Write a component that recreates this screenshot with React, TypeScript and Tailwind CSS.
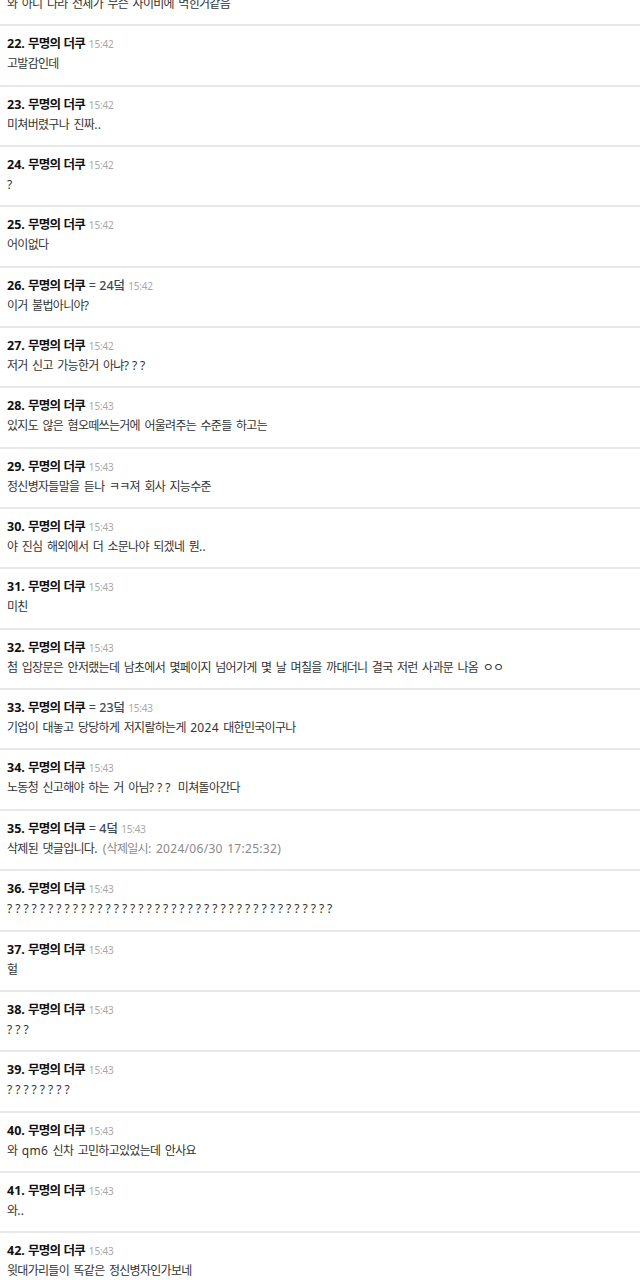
type Comment = {
  no: number;
  time: string;
  body: string;
  tag?: string;
  deleted?: string;
};

const comments: Comment[] = [
  { no: 22, time: "15:42", body: "고발감인데" },
  { no: 23, time: "15:42", body: "미쳐버렸구나 진짜.." },
  { no: 24, time: "15:42", body: "?" },
  { no: 25, time: "15:42", body: "어이없다" },
  { no: 26, time: "15:42", tag: "= 24덬", body: "이거 불법아니야?" },
  { no: 27, time: "15:42", body: "저거 신고 가능한거 아냐???" },
  { no: 28, time: "15:43", body: "있지도 않은 혐오떼쓰는거에 어울려주는 수준들 하고는" },
  { no: 29, time: "15:43", body: "정신병자들말을 듣나 ㅋㅋ져 회사 지능수준" },
  { no: 30, time: "15:43", body: "야 진심 해외에서 더 소문나야 되겠네 뭔.." },
  { no: 31, time: "15:43", body: "미친" },
  {
    no: 32,
    time: "15:43",
    body: "첨 입장문은 안저랬는데 남초에서 몇페이지 넘어가게 몇 날 며칠을 까대더니 결국 저런 사과문 나옴 ㅇㅇ",
  },
  { no: 33, time: "15:43", tag: "= 23덬", body: "기업이 대놓고 당당하게 저지랄하는게 2024 대한민국이구나" },
  { no: 34, time: "15:43", body: "노동청 신고해야 하는 거 아님??? 미쳐돌아간다" },
  {
    no: 35,
    time: "15:43",
    tag: "= 4덬",
    body: "삭제된 댓글입니다.",
    deleted: "(삭제일시: 2024/06/30 17:25:32)",
  },
  { no: 36, time: "15:43", body: "????????????????????????????????????????" },
  { no: 37, time: "15:43", body: "헐" },
  { no: 38, time: "15:43", body: "???" },
  { no: 39, time: "15:43", body: "????????" },
  { no: 40, time: "15:43", body: "와 qm6 신차 고민하고있었는데 안사요" },
  { no: 41, time: "15:43", body: "와.." },
  { no: 42, time: "15:43", body: "윗대가리들이 똑같은 정신병자인가보네" },
];

// the original font has narrower hangul and wider latin/question marks,
// so hangul runs get tight tracking and the rest stays normal
function Seg({ text, ko, other }: { text: string; ko: string; other: string }) {
  const parts = text.split(/([\uAC00-\uD7A3\u3131-\u318E]+|\?+)/).filter(Boolean);
  return (
    <>
      {parts.map((p, i) => {
        if (p.startsWith("?")) {
          return (
            <span key={i} className="tracking-[3px]">
              {p}
            </span>
          );
        }
        const isKo = /[\uAC00-\uD7A3\u3131-\u318E]/.test(p);
        return (
          <span key={i} className={isKo ? ko : other}>
            {p}
          </span>
        );
      })}
    </>
  );
}

const bodyCls =
  "mt-[2px] h-[20px] leading-[20px] text-[12px] text-[#333] [word-spacing:1px] whitespace-nowrap";
const bodyKo = "tracking-[-0.7px]";
const bodyOther = "tracking-[0.3px]";

function CommentItem({ c }: { c: Comment }) {
  return (
    <li className="border-b-2 border-[#e8e8e8] px-[7px] pt-[9px] pb-[10.35px]">
      <div className="flex items-baseline h-[17px] leading-[17px] whitespace-nowrap">
        <span className="text-[12.5px] font-bold text-[#111]">
          <Seg text={`${c.no}. 무명의 더쿠`} ko="tracking-[-0.8px]" other="tracking-[0px]" />
        </span>
        {c.tag && (
          <span className="ml-[4px] text-[12.5px] font-medium text-[#3c4a5c]">
            <Seg text={c.tag} ko="tracking-[-0.8px]" other="tracking-[0px]" />
          </span>
        )}
        <span className="ml-[4px] text-[10px] text-[#a8a8a8] tracking-[-0.2px]">{c.time}</span>
      </div>
      <p className={bodyCls}>
        <Seg text={c.body} ko={bodyKo} other={bodyOther} />
        {c.deleted && (
          <span className="ml-[5px] text-[#8a8a8a]">
            <Seg text={c.deleted} ko={bodyKo} other={bodyOther} />
          </span>
        )}
      </p>
    </li>
  );
}

export default function App() {
  return (
    <div className="w-[640px] h-[1280px] overflow-hidden bg-white font-['Noto_Sans','Noto_Sans_CJK_KR',sans-serif]">
      <ul className="-mt-[34px]">
        <li className="border-b-2 border-[#e8e8e8] px-[7px] pt-[9px] pb-[10.35px]">
          <div className="h-[17px]" />
          <p className={bodyCls}>
            <Seg text="와 아니 나라 전체가 무슨 사이비에 먹힌거같음" ko={bodyKo} other={bodyOther} />
          </p>
        </li>
        {comments.map((c) => (
          <CommentItem key={c.no} c={c} />
        ))}
      </ul>
    </div>
  );
}
